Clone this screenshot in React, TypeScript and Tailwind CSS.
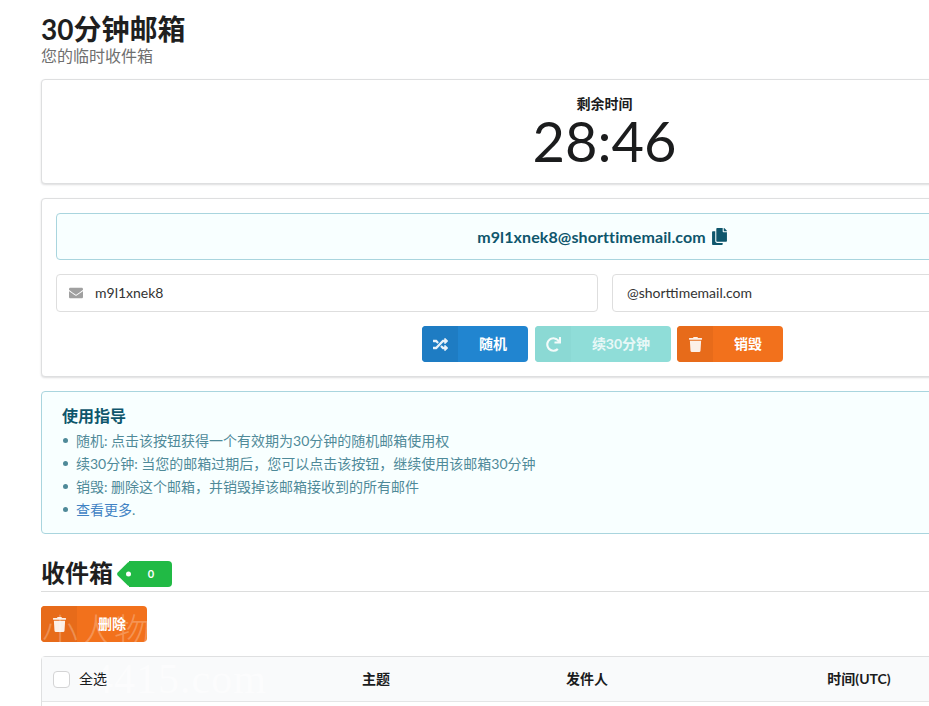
import { FaCopy, FaEnvelope, FaRandom, FaRedo, FaTrash } from "react-icons/fa";
import type { ComponentType, ReactNode } from "react";

const font = "font-['Lato','Noto_Sans_CJK_SC',sans-serif]";

function IconButton({ icon: Icon, label, width, bg, shade, muted }: {
    icon: ComponentType<{ className?: string }>;
    label: string;
    width: string;
    bg: string;
    shade: string;
    muted?: boolean;
}) {
    return (
        <button className={`flex h-9 items-stretch overflow-hidden rounded-[4px] text-[14px] font-bold text-white ${width} ${bg}`}>
            <span className={`flex w-9 shrink-0 items-center justify-center ${shade}`}>
                <Icon className="size-[15px] opacity-90" />
            </span>
            <span className={`flex flex-1 items-center justify-center ${muted ? "opacity-80" : ""}`}>{label}</span>
        </button>
    );
}

function Segment({ className, children }: { className?: string; children: ReactNode }) {
    return (
        <div className={`rounded-[4px] border border-[#dedfe0] bg-white shadow-[0_1px_2px_0_rgba(34,36,38,0.15)] ${className ?? ""}`}>
            { children }
        </div>
    );
}

function Guide({ label, children }: { label?: string; children: ReactNode }) {
    return (
        <li className="flex h-[23px] items-center whitespace-pre">
            <span className="mr-[8px] ml-px size-[5px] rounded-full bg-[#4f8a99]" />
            { label && <span>{label}: </span> }
            { children }
        </li>
    );
}

export default function App() {
    return (
        <div className={`relative h-[706px] w-[929px] overflow-hidden bg-white text-[14px] leading-[1.4285em] text-[#212121] ${font}`}>
            <div className="ml-[41px] w-[1127px]">
                <h1 className="pt-[11px] text-[28px] leading-[36px] font-bold text-[#1f1f1f]">30分钟邮箱</h1>
                <p className="text-[16px] leading-[18px] text-[#6f6f6f]">您的临时收件箱</p>

                <Segment className="mt-[14px] h-[105px] text-center">
                    <div className="pt-[15px] text-[14px] leading-[18px] font-bold text-[#1b1c1d]">剩余时间</div>
                    <div className="text-[56px] leading-[56px] text-[#1b1c1d]">28:46</div>
                </Segment>

                <Segment className="mt-[14px] h-[179px] px-[14px] pt-[14px]">
                    <div className="flex h-[47px] items-center justify-center rounded-[4px] border border-[#a9d5de] bg-[#f8ffff] pr-[4px] text-[16px] font-bold tracking-[0.1px] text-[#0e566c]">
                        m9l1xnek8@shorttimemail.com
                        <FaCopy className="ml-[5px] size-[17px]" />
                    </div>
                    <div className="mt-[14px] flex gap-[14px] text-[14px] text-[#333]">
                        <div className="flex h-[38px] w-[542px] items-center rounded-[4px] border border-[#dedede] pl-[12px]">
                            <FaEnvelope className="mr-[12px] size-[14px] text-[#a0a0a0]" />
                            m9l1xnek8
                        </div>
                        <div className="flex h-[38px] flex-1 items-center rounded-[4px] border border-[#dedede] pl-[14px]">
                            @shorttimemail.com
                        </div>
                    </div>
                    <div className="mt-[14px] mr-[4px] flex justify-center gap-[7px]">
                        <IconButton icon={FaRandom} label="随机" width="w-[106px]" bg="bg-[#2185d0]" shade="bg-[#1e7cc3]" />
                        <IconButton icon={FaRedo} label="续30分钟" width="w-[136px]" bg="bg-[#8fddd8]" shade="bg-[#8bd9d4]" muted />
                        <IconButton icon={FaTrash} label="销毁" width="w-[106px] -ml-px" bg="bg-[#f2711c]" shade="bg-[#e76b1a]" />
                    </div>
                </Segment>

                <div className="mt-[14px] h-[143px] rounded-[4px] border border-[#a9d5de] bg-[#f8ffff] pl-[20px] pt-[13px] text-[14px] text-[#4f8a99]">
                    <h3 className="text-[16px] leading-[21px] font-bold text-[#0e566c]">使用指导</h3>
                    <ul className="mt-[3px]">
                        <Guide label="随机">点击该按钮获得一个有效期为30分钟的随机邮箱使用权</Guide>
                        <Guide label="续30分钟">当您的邮箱过期后，您可以点击该按钮，继续使用该邮箱30分钟</Guide>
                        <Guide label="销毁">删除这个邮箱，并销毁掉该邮箱接收到的所有邮件</Guide>
                        <Guide><a className="text-[#4183c4]">查看更多</a>.</Guide>
                    </ul>
                </div>

                <div className="mt-[21px] flex h-[37px] items-center border-b border-[#dcdddd] pb-[3px]">
                    <h2 className="mt-[3px] text-[24px] leading-[30px] font-bold text-[#1f1f1f]">收件箱</h2>
                    <span className="relative top-[2px] ml-[16px] flex h-[26px] w-[43px] items-center justify-center rounded-r-[4px] bg-[#21ba45] pl-[1px] text-[11px] font-bold text-white">
                        <span className="absolute top-[13px] -left-[9px] size-[18px] -translate-y-1/2 rotate-45 rounded-[2px] bg-[#21ba45]" />
                        <span className="absolute top-1/2 left-[-3px] size-[5px] -translate-y-1/2 rounded-full bg-white" />
                        <span className="relative">0</span>
                    </span>
                </div>

                <div className="mt-[14px] flex">
                    <IconButton icon={FaTrash} label="删除" width="w-[106px]" bg="bg-[#f2711c]" shade="bg-[#e76b1a]" />
                </div>

                <div className="mt-[14px] h-[60px] rounded-t-[4px] border border-[#dfe0e1]">
                    <div className="grid h-[45px] grid-cols-[238px_192px_230px_314px_151px] items-center border-b border-[#e4e5e6] bg-[#f9fafb] text-center text-[14px] font-bold text-[#1b1c1d]">
                        <div className="relative z-10 flex items-center pl-[11px] font-normal">
                            <span className="mr-[9px] size-[17px] rounded-[4px] border border-[#d4d4d5] bg-white" />
                            全选
                        </div>
                        <div>主题</div>
                        <div>发件人</div>
                        <div>时间(UTC)</div>
                        <div />
                    </div>
                </div>
            </div>

            {/* faint watermark lying over the delete button and the table head */}
            <div className="pointer-events-none absolute top-[607px] left-[42px] font-['Noto_Sans_CJK_SC',sans-serif] text-[36px] leading-[44px] font-light whitespace-nowrap text-white/25">
                小人物
            </div>
            <div className="pointer-events-none absolute top-[657px] left-[92px] font-['Liberation_Serif',serif] text-[42px] leading-[44px] tracking-[1px] whitespace-nowrap text-white/50">
                4415.com
            </div>
        </div>
    );
}
